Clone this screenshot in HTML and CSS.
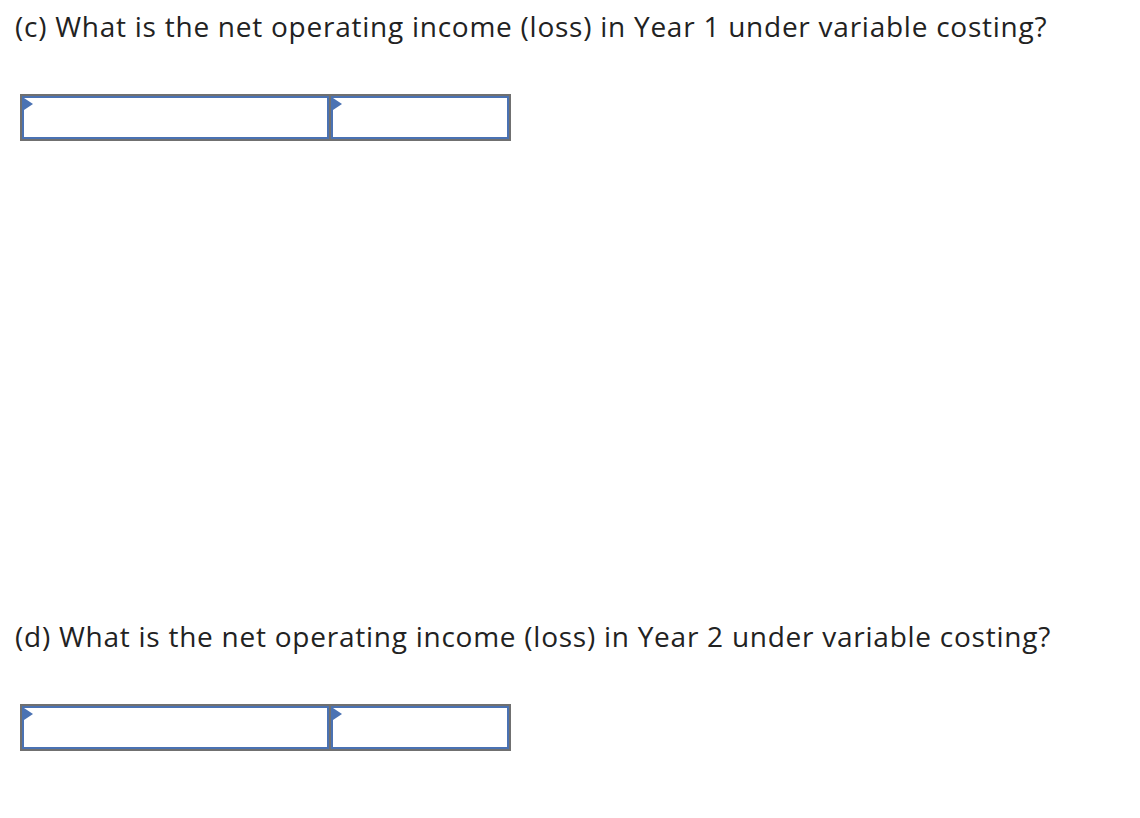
FILE: index.html
```html
<!DOCTYPE html>
<html>
<head>
<meta charset="utf-8">
<link rel="stylesheet" href="styles.css">
</head>
<body>
<section class="part">
  <p class="question">(c) What is the net operating income (loss) in Year 1 under variable costing?</p>
  <div class="answer">
    <div class="cell cell-label"><span class="flag"></span></div>
    <div class="cell cell-value"><span class="flag"></span></div>
  </div>
</section>
<section class="part">
  <p class="question">(d) What is the net operating income (loss) in Year 2 under variable costing?</p>
  <div class="answer">
    <div class="cell cell-label"><span class="flag"></span></div>
    <div class="cell cell-value"><span class="flag"></span></div>
  </div>
</section>
</body>
</html>
```
FILE: styles.css
```css
html, body {
  margin: 0;
  padding: 0;
  background: #ffffff;
}
body {
  font-family: "Open Sans", "Liberation Sans", sans-serif;
  color: #222222;
}
.part {
  height: 610px;
  display: flex;
  flex-direction: column;
}
.part:last-child {
  height: auto;
}
.question {
  margin: 9px 0 0 15px;
  font-size: 28px;
  line-height: 34px;
  letter-spacing: 0.75px;
}
.answer {
  margin: 51px 0 0 20px;
  width: 487px;
  height: 43px;
  border: 2px solid #707070;
  background: #707070;
  display: flex;
  gap: 2px;
}
.cell {
  position: relative;
  box-sizing: border-box;
  height: 43px;
  border: 2px solid #4a72b3;
  background: #ffffff;
}
.cell-label { width: 307px; }
.cell-value { width: 178px; }
.flag {
  position: absolute;
  left: 0;
  top: 0;
  width: 0;
  height: 0;
  border-top: 6px solid transparent;
  border-bottom: 6px solid transparent;
  border-left: 9px solid #4a72b3;
}
```
